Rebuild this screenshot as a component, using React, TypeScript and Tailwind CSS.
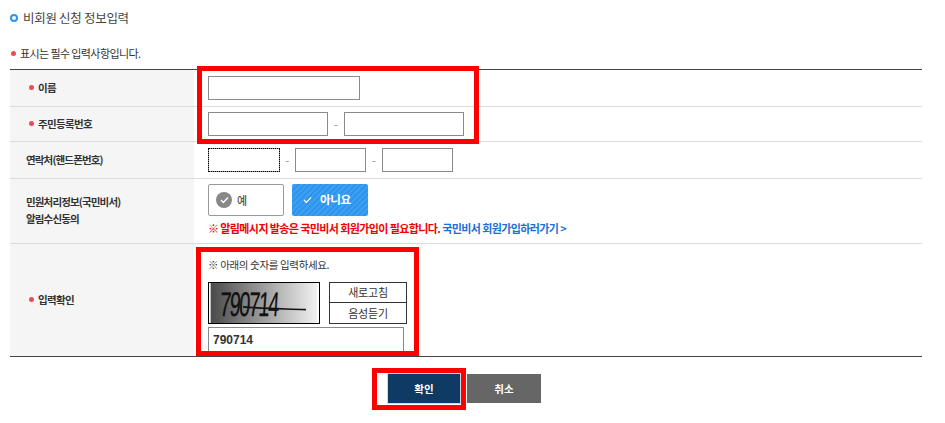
import type { ReactNode } from 'react';

const inputClass = 'h-6 border border-[#8a8a8a] bg-white';

function Star() {
  return <span className="mr-[4px] inline-block h-[5px] w-[5px] rounded-full bg-[#ee4a58] align-[3px]"></span>;
}

interface RowProps {
  label: ReactNode;
  required?: boolean;
  className: string;
  children: ReactNode;
}

function Row({ label, required, className, children }: RowProps) {
  return (
    <div className={`flex border-b border-[#dcdcdc] ${className}`}>
      <div
        className={`flex w-[184px] shrink-0 items-center bg-[#f5f5f5] pb-px text-[10.5px] font-bold tracking-[-0.65px] text-[#333] ${
          required ? 'pl-[19px]' : 'pl-4'
        }`}
      >
        {required && <Star />}
        <div>{label}</div>
      </div>
      <div className="min-w-0 flex-1 pl-[14px]">{children}</div>
    </div>
  );
}

function Captcha() {
  return (
    <svg width="112" height="42" viewBox="0 0 112 42" className="border border-black">
      <defs>
        <linearGradient id="captcha-bg" x1="0" x2="1" y1="0" y2="0">
          <stop offset="0" stopColor="#4a4a4a" />
          <stop offset="1" stopColor="#f2f2f2" />
        </linearGradient>
      </defs>
      <rect width="112" height="42" fill="url(#captcha-bg)" />
      <text
        x="0"
        y="0"
        transform="translate(9 35) skewX(-4) scale(0.58 1)"
        fontFamily="Liberation Sans, sans-serif"
        fontSize="36"
        letterSpacing="-2.5"
        stroke="#111"
        strokeWidth="0.3"
        fill="#111"
      >
        790714
      </text>
      <path d="M34 25 C55 27 75 27 100 28" stroke="#111" strokeWidth="1.8" fill="none" />
    </svg>
  );
}

export default function App() {
  return (
    <div className="relative h-[423px] w-[945px] overflow-hidden bg-white font-['Noto_Sans_CJK_KR',sans-serif]">
      <div className="flex h-[36px] items-center gap-[5px] pl-[10px]">
        <span className="h-2 w-2 rounded-full border-2 border-[#2b96e8]"></span>
        <h2 className="text-[12.5px] leading-none tracking-[-0.3px] text-[#444]">비회원 신청 정보입력</h2>
      </div>

      <p className="mt-[11px] flex h-[12px] items-center pl-[11px] text-[11px] leading-none tracking-[-0.6px] text-[#333]">
        <Star />
        표시는 필수 입력사항입니다.
      </p>

      <div className="ml-[10px] mt-[10px] w-[912px] border-y border-y-[#444]">
        <Row label="이름" required className="h-[37px]">
          <div className="pt-[6px]">
            <div className={`${inputClass} w-[152px]`}></div>
          </div>
        </Row>
        <Row label="주민등록번호" required className="h-[35px]">
          <div className="flex items-center pt-[5px]">
            <div className={`${inputClass} w-[120px]`}></div>
            <span className="w-4 text-center text-[11px] leading-none text-[#888]">-</span>
            <div className={`${inputClass} w-[120px]`}></div>
          </div>
        </Row>
        <Row label={<span className="tracking-[-0.85px]">연락처(핸드폰번호)</span>} className="h-[37px]">
          <div className="flex items-center pt-[6px]">
            <div className="h-6 w-[72px] border border-[#8a8a8a] bg-white outline-1 -outline-offset-1 outline-dotted outline-black"></div>
            <span className="w-[15px] text-center text-[11px] leading-none text-[#888]">-</span>
            <div className={`${inputClass} w-[71px]`}></div>
            <span className="w-4 text-center text-[11px] leading-none text-[#888]">-</span>
            <div className={`${inputClass} w-[71px]`}></div>
          </div>
        </Row>
        <Row
          label={
            <div className="-mt-px tracking-[-0.85px] leading-[17px]">
              민원처리정보(국민비서)
              <br />
              알림수신동의
            </div>
          }
          className="h-[65px]"
        >
          <div className="flex gap-2 pt-[5px]">
            <div className="flex h-8 w-[76px] items-center gap-[5px] rounded-[2px] border border-[#999] bg-white pl-[7px] text-[11px] font-medium text-[#555]">
              <span className="flex h-4 w-4 items-center justify-center rounded-full bg-[#888]">
                <svg width="9" height="8" viewBox="0 0 9 8" fill="none">
                  <path d="M1 4l2.4 2.4L8 1.5" stroke="#fff" strokeWidth="1.4" />
                </svg>
              </span>
              예
            </div>
            <div className="flex h-8 w-[76px] items-center gap-[8px] rounded-[2px] bg-[repeating-linear-gradient(135deg,#2f95ec,#2f95ec_2px,#3d9ff0_2px,#3d9ff0_4px)] pl-[11px] text-[11.5px] font-bold tracking-[-0.3px] text-white">
              <svg width="9" height="8" viewBox="0 0 9 8" fill="none">
                <path d="M1 4l2.4 2.4L8 1.5" stroke="#fff" strokeWidth="1.2" />
              </svg>
              아니요
            </div>
          </div>
          <p className="mt-[4px] text-[11px] font-bold leading-[16px] tracking-[-0.6px] text-[#f00000]">
            ※ 알림메시지 발송은 국민비서 회원가입이 필요합니다.{' '}
            <span className="text-[#1a6fd4]">국민비서 회원가입하러가기 &gt;</span>
          </p>
        </Row>
        <Row label="입력확인" required className="h-[112px] border-b-0">
          <p className="pt-[13px] text-[10.5px] leading-[15px] tracking-[-0.35px] text-[#333]">※ 아래의 숫자를 입력하세요.</p>
          <div className="mt-[10px] flex gap-[9px]">
            <Captcha />
            <div className="flex w-[78px] flex-col text-center text-[11px] tracking-[-0.2px] text-[#333]">
              <div className="flex h-[21px] items-center justify-center border border-[#333]">새로고침</div>
              <div className="-mt-px flex h-[22px] items-center justify-center border border-[#333]">음성듣기</div>
            </div>
          </div>
          <div className="mt-[3px] flex h-[25px] w-[196px] items-center border border-[#8a8a8a] pl-1 font-['Liberation_Sans',sans-serif] text-[12px] font-bold text-[#333]">
            790714
          </div>
        </Row>
      </div>

      <div className="ml-[387px] mt-[16px] flex gap-[6px]">
        <button className="h-[31px] w-[74px] border border-[#cfd8e0] bg-[#0e3a64] text-[10.5px] font-bold text-white">확인</button>
        <button className="mt-px h-[29px] w-[74px] bg-[#666] text-[10.5px] font-bold text-white">취소</button>
      </div>

      {/* red highlight boxes drawn over the form */}
      <div className="absolute left-[197px] top-[66px] h-[78px] w-[282px] border-[5px] border-[#ff0000]"></div>
      <div className="absolute left-[196px] top-[247px] h-[109px] w-[223px] border-[5px] border-[#ff0000]"></div>
      <div className="absolute left-[372px] top-[368px] h-[42px] w-[94px] border-[5px] border-[#ff0000]"></div>
    </div>
  );
}
